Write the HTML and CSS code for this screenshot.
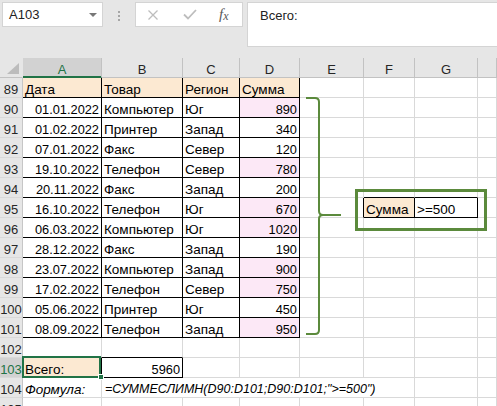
FILE: index.html
```html
<!DOCTYPE html>
<html lang="ru">
<head>
  <meta charset="UTF-8" />
  <meta name="viewport" content="width=device-width, initial-scale=1.0"/>
  <title>СУММЕСЛИМН</title>
  <link rel="stylesheet" href="styles.css">
</head>
<body>

  <!-- Name box + formula bar -->
  <div class="toolbar">
    <div class="namebox">A103<span class="drop"></span></div>
    <div class="grip"><i></i><i></i><i></i></div>
    <div class="fxbox">
      <svg class="ico-x" width="10" height="10" viewBox="0 0 10 10">
        <path d="M0.5 0.5 L9.5 9.5 M9.5 0.5 L0.5 9.5" />
      </svg>
      <svg class="ico-ok" width="14" height="11" viewBox="0 0 14 11">
        <path d="M1 5.5 L5 9.5 L13 1" />
      </svg>
      <span class="fx">f<span>x</span></span>
    </div>
    <div class="formula-bar">Всего:</div>
  </div>

  <!-- Sheet -->
  <div class="sheet">
    <table class="grid">
      <colgroup>
        <col style="width:23px"><col style="width:79px"><col style="width:81px"><col style="width:57px">
        <col style="width:60px"><col style="width:64px"><col style="width:51px"><col style="width:63px"><col style="width:19px">
      </colgroup>
      <thead>
        <tr>
          <th class="corner"><span class="tri"></span></th>
          <th class="cur">A</th><th>B</th><th>C</th><th>D</th><th>E</th><th>F</th><th>G</th><th></th>
        </tr>
      </thead>
      <tbody>
        <tr><th>89</th><td class="b hd">Дата</td><td class="b hd">Товар</td><td class="b hd">Регион</td><td class="b hd">Сумма</td><td></td><td></td><td></td><td></td></tr>
        <tr><th>90</th><td class="b num">01.01.2022</td><td class="b">Компьютер</td><td class="b">Юг</td><td class="b num pk">890</td><td></td><td></td><td></td><td></td></tr>
        <tr><th>91</th><td class="b num">01.02.2022</td><td class="b">Принтер</td><td class="b">Запад</td><td class="b num">340</td><td></td><td></td><td></td><td></td></tr>
        <tr><th>92</th><td class="b num">07.01.2022</td><td class="b">Факс</td><td class="b">Север</td><td class="b num">120</td><td></td><td></td><td></td><td></td></tr>
        <tr><th>93</th><td class="b num">19.10.2022</td><td class="b">Телефон</td><td class="b">Север</td><td class="b num pk">780</td><td></td><td></td><td></td><td></td></tr>
        <tr><th>94</th><td class="b num">20.11.2022</td><td class="b">Факс</td><td class="b">Запад</td><td class="b num">200</td><td></td><td class="bb"></td><td class="bb"></td><td></td></tr>
        <tr><th>95</th><td class="b num">16.10.2022</td><td class="b">Телефон</td><td class="b">Юг</td><td class="b num pk">670</td><td class="br"></td><td class="b hd">Сумма</td><td class="b">&gt;=500</td><td></td></tr>
        <tr><th>96</th><td class="b num">06.03.2022</td><td class="b">Компьютер</td><td class="b">Юг</td><td class="b num pk">1020</td><td></td><td></td><td></td><td></td></tr>
        <tr><th>97</th><td class="b num">28.12.2022</td><td class="b">Факс</td><td class="b">Запад</td><td class="b num">190</td><td></td><td></td><td></td><td></td></tr>
        <tr><th>98</th><td class="b num">23.07.2022</td><td class="b">Компьютер</td><td class="b">Запад</td><td class="b num pk">900</td><td></td><td></td><td></td><td></td></tr>
        <tr><th>99</th><td class="b num">17.02.2022</td><td class="b">Телефон</td><td class="b">Север</td><td class="b num pk">750</td><td></td><td></td><td></td><td></td></tr>
        <tr><th>100</th><td class="b num">05.06.2022</td><td class="b">Принтер</td><td class="b">Юг</td><td class="b num">450</td><td></td><td></td><td></td><td></td></tr>
        <tr><th>101</th><td class="b num">08.09.2022</td><td class="b">Телефон</td><td class="b">Запад</td><td class="b num pk">950</td><td></td><td></td><td></td><td></td></tr>
        <tr><th>102</th><td class="bb"></td><td class="bb"></td><td></td><td></td><td></td><td></td><td></td><td></td></tr>
        <tr><th class="cur">103</th><td class="b hd active">Всего:<span class="sel"></span><span class="handle"></span></td><td class="b num">5960</td><td></td><td></td><td></td><td></td><td></td><td></td></tr>
        <tr><th>104</th><td class="it">Формула:</td><td class="it formula" colspan="5">=СУММЕСЛИМН(D90:D101;D90:D101;"&gt;=500")</td><td></td><td></td></tr>
        <tr><th>105</th><td></td><td></td><td></td><td></td><td></td><td></td><td></td><td></td></tr>
      </tbody>
    </table>

    <!-- brace over D90:D101 and frame around the criteria -->
    <svg class="brace" width="50" height="260" viewBox="0 0 50 260">
      <path d="M6 10 H15 Q19 10 19 14 V123 Q19 127 23 127 H41 M23 127 Q19 127 19 131 V242 Q19 246 15 246 H6" />
    </svg>
    <div class="frame"></div>
  </div>

</body>
</html>
```

FILE: styles.css
```css
* {
  box-sizing: border-box;
}

body {
  margin: 0;
  width: 497px;
  height: 406px;
  overflow: hidden;
  background: #fff;
  color: #000;
  font-family: "Liberation Sans", Arial, sans-serif;
}

/* ---- toolbar ---- */

.toolbar {
  height: 58px;
  background: #e6e6e6;
  display: flex;
  align-items: flex-start;
  padding: 2px 0 0 2px;
}

.namebox {
  position: relative;
  width: 101px;
  height: 25px;
  background: #fff;
  border: 1px solid #d4d4d4;
  display: flex;
  align-items: center;
  padding-left: 6px;
  font-size: 13px;
  color: #222;
}

.namebox .drop {
  position: absolute;
  right: 5px;
  top: 10px;
  border-left: 4px solid transparent;
  border-right: 4px solid transparent;
  border-top: 4px solid #777;
}

.grip {
  width: 32px;
  display: flex;
  flex-direction: column;
  align-items: center;
  gap: 2px;
  padding-top: 9px;
}

.grip i {
  width: 2px;
  height: 2px;
  background: #a6a6a6;
}

.fxbox {
  width: 108px;
  height: 25px;
  background: #fff;
  border: 1px solid #d4d4d4;
  display: flex;
  align-items: center;
  padding-left: 12px;
}

.fxbox svg path {
  fill: none;
  stroke: #bdbdbd;
}

.ico-x path {
  stroke-width: 1.3;
}

.ico-ok {
  margin-left: 25px;
}

.ico-ok path {
  stroke-width: 1.8;
}

.fx {
  margin-left: 22px;
  font-family: "Liberation Serif", serif;
  font-style: italic;
  font-size: 15px;
  color: #595959;
}

.fx span {
  font-size: 12px;
  position: relative;
  top: 1px;
}

.formula-bar {
  flex: 1;
  margin-left: 4px;
  height: 45px;
  background: #fff;
  border: 1px solid #d4d4d4;
  border-right: none;
  padding: 5px 12px;
  font-size: 13px;
  line-height: 16px;
  color: #222;
}

/* ---- sheet ---- */

.sheet {
  position: relative;
}

.grid {
  border-collapse: separate;
  border-spacing: 0;
  table-layout: fixed;
  width: 497px;
}

.grid td,
.grid th {
  height: 20px;
  padding: 4px 2px 0;
  line-height: 15px;
  font-size: 13.5px;
  font-weight: normal;
  white-space: nowrap;
  text-align: left;
  border-right: 1px solid #d9d9d9;
  border-bottom: 1px solid #d9d9d9;
}

.grid th {
  background: #e6e6e6;
  color: #262626;
  font-size: 13px;
  text-align: center;
  padding: 4px 0 0;
}

.grid thead th {
  padding-top: 3px;
  border-right-color: #c2c2c2;
  border-bottom-color: #c2c2c2;
}

.grid tbody th {
  border-right-color: #c6c6c6;
}

.grid th.corner {
  position: relative;
  border-right-color: #e6e6e6;
}

.tri {
  position: absolute;
  right: 3px;
  bottom: 3px;
  border-left: 12px solid transparent;
  border-bottom: 11px solid #bcbcbc;
}

.grid th.cur {
  background: #d2d2d2;
  color: #217346;
}

.grid thead th.cur {
  border-bottom-color: #217346;
  box-shadow: inset 0 -1px 0 #217346;
}

/* cell styles */

.hd {
  background: #fce9d2;
}

.pk {
  background: #fce8f6;
}

.grid .num {
  text-align: right;
  font-size: 12.8px;
}

.grid .b {
  border-right-color: #000;
  border-bottom-color: #000;
}

.grid .bb {
  border-bottom-color: #000;
}

.grid .br {
  border-right-color: #000;
}

.it {
  font-style: italic;
}

.grid .formula {
  font-size: 12.5px;
  padding-left: 3px;
}

/* selected cell */

.active {
  position: relative;
}

.sel {
  position: absolute;
  top: -2px;
  right: 0;
  bottom: -1px;
  left: -1px;
  border: 2px solid #217346;
}

.handle {
  position: absolute;
  right: -3px;
  bottom: -3px;
  width: 6px;
  height: 6px;
  background: #217346;
  border: 1px solid #fff;
}

/* drawings */

.brace {
  position: absolute;
  left: 300px;
  top: 30px;
}

.brace path {
  fill: none;
  stroke: #5b8a3c;
  stroke-width: 2;
}

.frame {
  position: absolute;
  left: 355px;
  top: 131px;
  width: 132px;
  height: 42px;
  border: 3px solid #5b8a3c;
}
```
